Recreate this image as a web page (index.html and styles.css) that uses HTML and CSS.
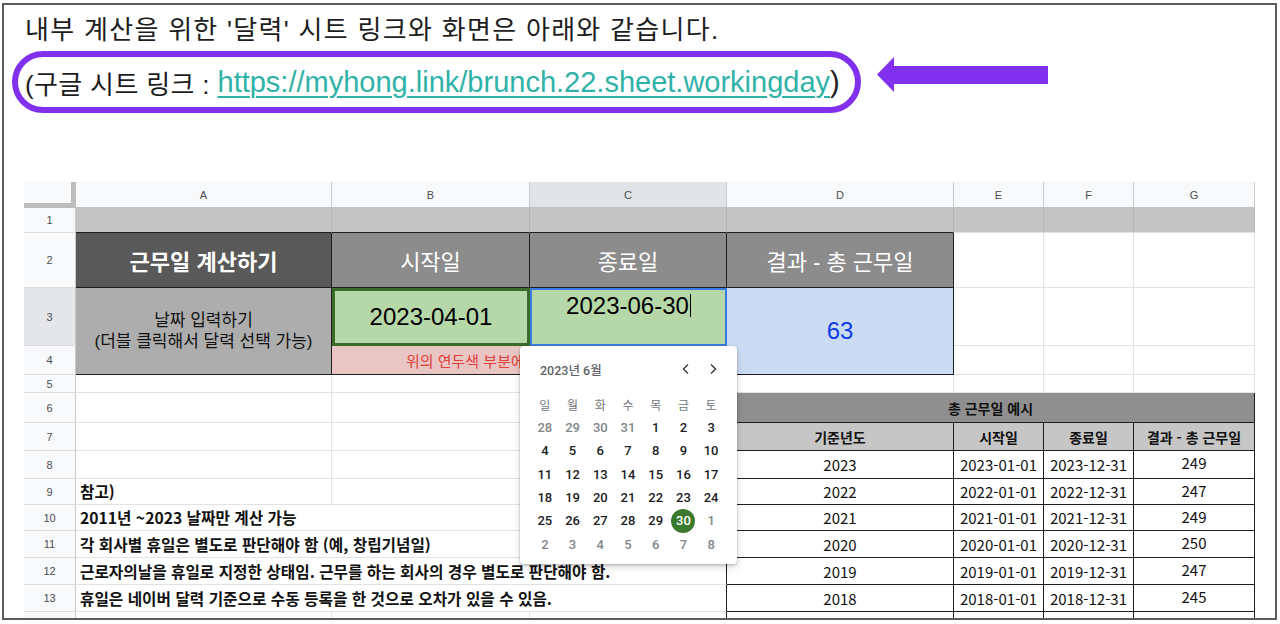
FILE: index.html
```html
<!DOCTYPE html>
<html lang="ko">
<head>
<meta charset="utf-8">
<title>근무일 계산 시트</title>
<link rel="stylesheet" href="styles.css">
</head>
<body>
<div class="frame">
  <div class="intro">
    <p class="line1">내부 계산을 위한 '달력' 시트 링크와 화면은 아래와 같습니다.</p>
    <div class="linkrow">
      <div class="pill"><span class="lead">(구글 시트 링크 :&nbsp;</span><a class="url">https://myhong.link/brunch.22.sheet.workingday</a><span class="paren">)</span></div>
      <svg class="arrow" width="172" height="37" viewBox="0 0 172 37"><polygon points="1,18.5 18,1 18,10 172,10 172,28 18,28 18,36" fill="#8131ee"/></svg>
    </div>
  </div>

  <div class="sheet">
    <div class="grid">
      <!-- column headers -->
      <div class="corner"></div>
      <div class="ch">A</div><div class="ch">B</div><div class="ch ch-sel">C</div><div class="ch">D</div><div class="ch">E</div><div class="ch">F</div><div class="ch">G</div>

      <!-- row 1 -->
      <div class="rh">1</div>
      <div class="c band bk-b"></div><div class="c band bk-b"></div><div class="c band bk-b"></div><div class="c band bk-b"></div>
      <div class="c band"></div><div class="c band"></div><div class="c band"></div>

      <!-- row 2 -->
      <div class="rh">2</div>
      <div class="c bk hd-dark">근무일 계산하기</div>
      <div class="c bk hd">시작일</div>
      <div class="c bk hd">종료일</div>
      <div class="c bk hd">결과 - 총 근무일</div>
      <div class="c"></div><div class="c"></div><div class="c"></div>

      <!-- row 3 -->
      <div class="rh rh-sel">3</div>
      <div class="c bk label rows2">날짜 입력하기<br>(더블 클릭해서 달력 선택 가능)</div>
      <div class="c date-in start">2023-04-01</div>
      <div class="c date-in end"><span>2023-06-30</span><span class="caret"></span></div>
      <div class="c bk result rows2">63</div>
      <div class="c"></div><div class="c"></div><div class="c"></div>

      <!-- row 4 -->
      <div class="rh">4</div>
      <div class="c bk hint cols2"><span class="hint-text">위의 연두색 부분에 날짜를 입력하세요</span></div>
      <div class="c"></div><div class="c"></div><div class="c"></div>

      <!-- row 5 -->
      <div class="rh">5</div>
      <div class="c"></div><div class="c"></div><div class="c"></div><div class="c"></div><div class="c"></div><div class="c"></div><div class="c"></div>

      <!-- row 6 -->
      <div class="rh">6</div>
      <div class="c"></div><div class="c"></div><div class="c bk-r"></div>
      <div class="c bk ttitle cols4">총 근무일 예시</div>

      <!-- row 7 -->
      <div class="rh">7</div>
      <div class="c"></div><div class="c"></div><div class="c bk-r"></div>
      <div class="c bk th">기준년도</div><div class="c bk th">시작일</div><div class="c bk th">종료일</div><div class="c bk th">결과 - 총 근무일</div>

      <!-- row 8 -->
      <div class="rh">8</div>
      <div class="c"></div><div class="c"></div><div class="c bk-r"></div>
      <div class="c bk td">2023</div><div class="c bk td">2023-01-01</div><div class="c bk td">2023-12-31</div><div class="c bk td up">249</div>

      <!-- row 9 -->
      <div class="rh">9</div>
      <div class="c note">참고)</div><div class="c"></div><div class="c bk-r"></div>
      <div class="c bk td">2022</div><div class="c bk td">2022-01-01</div><div class="c bk td">2022-12-31</div><div class="c bk td up">247</div>

      <!-- row 10 -->
      <div class="rh">10</div>
      <div class="c bk-r note cols3">2011년 ~2023 날짜만 계산 가능</div>
      <div class="c bk td">2021</div><div class="c bk td">2021-01-01</div><div class="c bk td">2021-12-31</div><div class="c bk td up">249</div>

      <!-- row 11 -->
      <div class="rh">11</div>
      <div class="c bk-r note cols3">각 회사별 휴일은 별도로 판단해야 함 (예, 창립기념일)</div>
      <div class="c bk td">2020</div><div class="c bk td">2020-01-01</div><div class="c bk td">2020-12-31</div><div class="c bk td up">250</div>

      <!-- row 12 -->
      <div class="rh">12</div>
      <div class="c bk-r note cols3">근로자의날을 휴일로 지정한 상태임. 근무를 하는 회사의 경우 별도로 판단해야 함.</div>
      <div class="c bk td">2019</div><div class="c bk td">2019-01-01</div><div class="c bk td">2019-12-31</div><div class="c bk td up">247</div>

      <!-- row 13 -->
      <div class="rh">13</div>
      <div class="c bk-r note cols3">휴일은 네이버 달력 기준으로 수동 등록을 한 것으로 오차가 있을 수 있음.</div>
      <div class="c bk td">2018</div><div class="c bk td">2018-01-01</div><div class="c bk td">2018-12-31</div><div class="c bk td up">245</div>

      <!-- row 14 (partly visible) -->
      <div class="rh"></div>
      <div class="c"></div><div class="c"></div><div class="c bk-r"></div>
      <div class="c bk"></div><div class="c bk"></div><div class="c bk"></div><div class="c bk"></div>
    </div>

    <div class="picker">
      <div class="picker-head">
        <span class="picker-title">2023년 6월</span>
        <span class="nav"><svg width="10" height="12" viewBox="0 0 10 12"><path d="M7 1.5 L2.5 6 L7 10.5" fill="none" stroke="#3c4043" stroke-width="1.5"/></svg></span>
        <span class="nav"><svg width="10" height="12" viewBox="0 0 10 12"><path d="M3 1.5 L7.5 6 L3 10.5" fill="none" stroke="#3c4043" stroke-width="1.5"/></svg></span>
      </div>
      <div class="days">
        <span class="wd">일</span><span class="wd">월</span><span class="wd">화</span><span class="wd">수</span><span class="wd">목</span><span class="wd">금</span><span class="wd">토</span>
        <span class="out">28</span><span class="out">29</span><span class="out">30</span><span class="out">31</span><span>1</span><span>2</span><span>3</span>
        <span>4</span><span>5</span><span>6</span><span>7</span><span>8</span><span>9</span><span>10</span>
        <span>11</span><span>12</span><span>13</span><span>14</span><span>15</span><span>16</span><span>17</span>
        <span>18</span><span>19</span><span>20</span><span>21</span><span>22</span><span>23</span><span>24</span>
        <span>25</span><span>26</span><span>27</span><span>28</span><span>29</span><span class="sel"><b>30</b></span><span class="out">1</span>
        <span class="out">2</span><span class="out">3</span><span class="out">4</span><span class="out">5</span><span class="out">6</span><span class="out">7</span><span class="out">8</span>
      </div>
    </div>
  </div>
</div>
</body>
</html>
```
FILE: styles.css
```css
* { box-sizing: border-box; margin: 0; padding: 0; }
html, body { width: 1280px; height: 624px; overflow: hidden; background: #fff; }
body { font-family: "Liberation Sans", "Noto Sans CJK KR", sans-serif; color: #000; }

.frame {
  width: 1275px;
  height: 617px;
  margin: 3px 0 0 2px;
  border: 2px solid #5b5b5b;
  overflow: hidden;
}

/* intro text */
.intro { padding-top: 10px; }
.line1 {
  font-size: 26px;
  line-height: 30px;
  padding-left: 21px;
  letter-spacing: 1.3px;
  color: #1d1d1d;
  white-space: nowrap;
}
.linkrow { display: flex; align-items: flex-start; margin-top: 6px; padding-left: 8px; }
.pill {
  width: 849px;
  height: 62px;
  border: 6px solid #8131ee;
  border-radius: 31px;
  display: flex;
  align-items: center;
  padding-left: 7px;
  font-size: 26px;
  color: #1d1d1d;
  white-space: nowrap;
}
.lead { letter-spacing: 0.35px; }
.url {
  color: #2fb2a8;
  font-size: 29px;
  text-decoration: underline;
  text-decoration-thickness: 1.5px;
  text-underline-offset: 4px;
}
.paren { font-size: 29px; }
.arrow { margin: 5px 0 0 15px; }

/* sheet */
.sheet { position: relative; margin: 69px 0 0 20px; width: 1231px; }
.grid {
  display: grid;
  grid-template-columns: 52px 256px 198px 197px 227px 90px 90px 121px;
  grid-template-rows: 26px 25px 55px 58px 29px 18px 30px 28px 28px 26px 26px 27px 27px 27px 27px;
}
.corner {
  background: #f8f9fa;
  border-right: 5px solid #bdbdbd;
  border-bottom: 5px solid #bdbdbd;
}
.ch {
  background: #f8f9fa;
  border-right: 1px solid #c8cacc;
  border-bottom: 1px solid #c0c2c4;
  font-size: 11px;
  color: #4a4d51;
  display: flex; align-items: center; justify-content: center;
}
.ch-sel { background: #e1e3e6; }
.rh {
  background: #f8f9fa;
  border-right: 1px solid #c8cacc;
  border-bottom: 1px solid #dcdcdc;
  font-size: 11px;
  color: #4a4d51;
  display: flex; align-items: center; justify-content: center;
}
.rh-sel { background: #e4e6e9; }

.c {
  border-right: 1px solid #e2e3e3;
  border-bottom: 1px solid #e2e3e3;
  display: flex; align-items: center; justify-content: center;
  white-space: nowrap;
  overflow: hidden;
}
.bk { border-right-color: #1e1e1e; border-bottom-color: #1e1e1e; }
.bk-b { border-bottom-color: #1e1e1e; }
.bk-r { border-right-color: #1e1e1e; }
.rows2 { grid-row: span 2; }
.cols2 { grid-column: span 2; }
.cols3 { grid-column: span 3; }
.cols4 { grid-column: span 4; }

.band { background: #c4c4c4; border-right-color: #b6b6b6; }

.hd-dark { background: #595959; color: #fff; font-size: 22px; font-weight: 700; }
.hd { background: #8c8c8c; color: #fff; font-size: 22px; }

.label {
  background: #adadad;
  flex-direction: column;
  font-size: 17px;
  line-height: 21px;
  text-align: center;
  color: #111;
}
.date-in { background: #b6d7a8; font-size: 24px; }
.start { border: 3px solid #3b6b2b; }
.end {
  border: 2px solid #3c7ae4;
  align-items: flex-start;
  padding-top: 2px;
}
.caret { display: inline-block; width: 1px; height: 23px; background: #000; margin: 2px 0 0 1px; }
.result { background: #cbdbf3; color: #0b3be6; font-size: 24px; }
.hint { background: #e9c6c4; justify-content: flex-start; padding-left: 74px; }
.hint-text { color: #e0403a; font-size: 15px; }

.note {
  justify-content: flex-start;
  padding-left: 4px;
  font-family: "Noto Sans CJK KR", sans-serif;
  font-weight: 700;
  font-size: 15.7px;
  color: #111;
}

.ttitle {
  background: #8f8f8f;
  font-family: "Noto Sans CJK KR", sans-serif;
  font-weight: 700;
  font-size: 14px;
  color: #111;
}
.th {
  background: #c6c6c6;
  font-family: "Noto Sans CJK KR", sans-serif;
  font-weight: 700;
  font-size: 14px;
  color: #111;
}
.td {
  font-family: "Noto Sans CJK KR", sans-serif;
  font-size: 15px;
  color: #111;
}
.up { align-items: flex-start; padding-top: 1px; }

/* date picker popup */
.picker {
  position: absolute;
  left: 496px;
  top: 164px;
  width: 217px;
  height: 218px;
  background: #fff;
  border-radius: 4px;
  box-shadow: 0 1px 3px rgba(0,0,0,0.25), 0 4px 8px rgba(0,0,0,0.12);
  padding: 0 12px 8px 11px;
  font-family: Roboto, "Noto Sans CJK KR", sans-serif;
}
.picker-head { height: 46px; display: flex; align-items: center; padding-left: 9px; }
.picker-title { flex: 1; font-size: 12.5px; font-weight: 500; color: #5f6368; }
.nav { width: 24px; height: 24px; display: flex; align-items: center; justify-content: center; margin-left: 3px; }
.days {
  display: grid;
  grid-template-columns: repeat(7, 1fr);
  grid-template-rows: 24px repeat(6, 23.33px);
  font-size: 13px;
  font-weight: 500;
  color: #202124;
}
.days span { display: flex; align-items: center; justify-content: center; }
.days .wd { font-size: 12px; font-weight: 400; color: #70757a; }
.days .out { color: #80868b; }
.days .sel b {
  width: 24px; height: 24px; border-radius: 50%;
  background: #3b7a2f; color: #fff; font-weight: 500;
  display: flex; align-items: center; justify-content: center;
}
```
